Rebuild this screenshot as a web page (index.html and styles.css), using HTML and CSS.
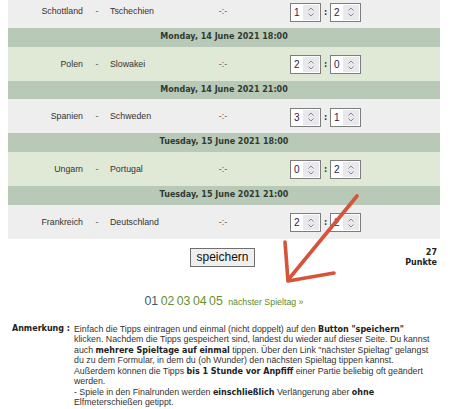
FILE: index.html
```html
<!DOCTYPE html>
<html lang="de">
<head>
<meta charset="utf-8">
<title>Tipps</title>
<link rel="stylesheet" href="styles.css">
</head>
<body>
<div class="page">
  <div class="matches">
    <div class="row grey">
      <span class="home">Schottland</span><span class="dash">-</span><span class="away">Tschechien</span><span class="result">-:-</span>
      <span class="tipp"><span class="score"><span class="val">1</span><span class="spin"><svg width="8" height="12" viewBox="0 0 8 12"><path d="M1.5 4.5 L4 2 L6.5 4.5 M1.5 7.5 L4 10 L6.5 7.5" fill="none" stroke="#8a8a8a" stroke-width="1"/></svg></span></span><span class="colon">:</span><span class="score"><span class="val">2</span><span class="spin"><svg width="8" height="12" viewBox="0 0 8 12"><path d="M1.5 4.5 L4 2 L6.5 4.5 M1.5 7.5 L4 10 L6.5 7.5" fill="none" stroke="#8a8a8a" stroke-width="1"/></svg></span></span></span>
    </div>
    <div class="head">Monday, 14 June 2021 18:00</div>
    <div class="row green">
      <span class="home">Polen</span><span class="dash">-</span><span class="away">Slowakei</span><span class="result">-:-</span>
      <span class="tipp"><span class="score"><span class="val">2</span><span class="spin"><svg width="8" height="12" viewBox="0 0 8 12"><path d="M1.5 4.5 L4 2 L6.5 4.5 M1.5 7.5 L4 10 L6.5 7.5" fill="none" stroke="#8a8a8a" stroke-width="1"/></svg></span></span><span class="colon">:</span><span class="score"><span class="val">0</span><span class="spin"><svg width="8" height="12" viewBox="0 0 8 12"><path d="M1.5 4.5 L4 2 L6.5 4.5 M1.5 7.5 L4 10 L6.5 7.5" fill="none" stroke="#8a8a8a" stroke-width="1"/></svg></span></span></span>
    </div>
    <div class="head">Monday, 14 June 2021 21:00</div>
    <div class="row grey">
      <span class="home">Spanien</span><span class="dash">-</span><span class="away">Schweden</span><span class="result">-:-</span>
      <span class="tipp"><span class="score"><span class="val">3</span><span class="spin"><svg width="8" height="12" viewBox="0 0 8 12"><path d="M1.5 4.5 L4 2 L6.5 4.5 M1.5 7.5 L4 10 L6.5 7.5" fill="none" stroke="#8a8a8a" stroke-width="1"/></svg></span></span><span class="colon">:</span><span class="score"><span class="val">1</span><span class="spin"><svg width="8" height="12" viewBox="0 0 8 12"><path d="M1.5 4.5 L4 2 L6.5 4.5 M1.5 7.5 L4 10 L6.5 7.5" fill="none" stroke="#8a8a8a" stroke-width="1"/></svg></span></span></span>
    </div>
    <div class="head">Tuesday, 15 June 2021 18:00</div>
    <div class="row green">
      <span class="home">Ungarn</span><span class="dash">-</span><span class="away">Portugal</span><span class="result">-:-</span>
      <span class="tipp"><span class="score"><span class="val">0</span><span class="spin"><svg width="8" height="12" viewBox="0 0 8 12"><path d="M1.5 4.5 L4 2 L6.5 4.5 M1.5 7.5 L4 10 L6.5 7.5" fill="none" stroke="#8a8a8a" stroke-width="1"/></svg></span></span><span class="colon">:</span><span class="score"><span class="val">2</span><span class="spin"><svg width="8" height="12" viewBox="0 0 8 12"><path d="M1.5 4.5 L4 2 L6.5 4.5 M1.5 7.5 L4 10 L6.5 7.5" fill="none" stroke="#8a8a8a" stroke-width="1"/></svg></span></span></span>
    </div>
    <div class="head">Tuesday, 15 June 2021 21:00</div>
    <div class="row grey">
      <span class="home">Frankreich</span><span class="dash">-</span><span class="away">Deutschland</span><span class="result">-:-</span>
      <span class="tipp"><span class="score"><span class="val">2</span><span class="spin"><svg width="8" height="12" viewBox="0 0 8 12"><path d="M1.5 4.5 L4 2 L6.5 4.5 M1.5 7.5 L4 10 L6.5 7.5" fill="none" stroke="#8a8a8a" stroke-width="1"/></svg></span></span><span class="colon">:</span><span class="score"><span class="val">2</span><span class="spin"><svg width="8" height="12" viewBox="0 0 8 12"><path d="M1.5 4.5 L4 2 L6.5 4.5 M1.5 7.5 L4 10 L6.5 7.5" fill="none" stroke="#8a8a8a" stroke-width="1"/></svg></span></span></span>
    </div>
  </div>

  <div class="actions">
    <span></span>
    <button class="save" type="button">speichern</button>
    <div class="points">27<br>Punkte</div>
  </div>

  <div class="pager">
    <a class="day current">01</a> <a class="day">02</a> <a class="day">03</a> <a class="day">04</a> <a class="day">05</a> <a class="next">nächster Spieltag »</a>
  </div>

  <div class="note">
    <div class="label">Anmerkung :</div>
    <div class="text">Einfach die Tipps eintragen und einmal (nicht doppelt) auf den <b>Button "speichern"</b><br>klicken. Nachdem die Tipps gespeichert sind, landest du wieder auf dieser Seite. Du kannst<br>auch <b>mehrere Spieltage auf einmal</b> tippen. Über den Link "nächster Spieltag" gelangst<br>du zu dem Formular, in dem du (oh Wunder) den nächsten Spieltag tippen kannst.<br>Außerdem können die Tipps <b>bis 1 Stunde vor Anpfiff</b> einer Partie beliebig oft geändert<br>werden.<br>- Spiele in den Finalrunden werden <b>einschließlich</b> Verlängerung aber <b>ohne</b><br>Elfmeterschießen getippt.</div>
  </div>

  <svg class="arrow" width="450" height="409" viewBox="0 0 450 409">
    <g fill="none" stroke="#d5553a" stroke-width="3.6" stroke-linecap="round" stroke-linejoin="round">
      <path d="M357 196 L288 280"/>
      <path d="M285 242 L288 281 L334 273"/>
    </g>
  </svg>
</div>
</body>
</html>
```

FILE: styles.css
```css
html, body {
  margin: 0;
  padding: 0;
  background: #ffffff;
}

.page {
  position: relative;
  width: 450px;
  height: 409px;
  overflow: hidden;
  font-family: "Liberation Sans", Arial, sans-serif;
  font-size: 8.8px;
  color: #333333;
}

.matches {
  margin: -6px 10px 0 8px;
  width: 432px;
}

.row {
  display: grid;
  grid-template-columns: 78px 22px 82px 66px 1fr;
  align-items: center;
  height: 34px;
}

.grey { background: #eeeeee; }
.green { background: #dfe9d6; }

.head {
  height: 18.67px;
  line-height: 18.67px;
  background: #b9c9b8;
  text-align: center;
  font-family: "DejaVu Sans", Verdana, sans-serif;
  font-weight: bold;
  font-size: 8px;
  color: #2f3a30;
}

.home {
  text-align: right;
  padding-right: 3px;
}

.dash {
  text-align: center;
  color: #555555;
}

.away {
  padding-left: 2px;
}

.result {
  text-align: center;
  color: #555555;
}

.tipp {
  display: flex;
  align-items: center;
  padding-left: 34px;
  padding-top: 2px;
}

.score {
  display: flex;
  width: 29px;
  height: 17px;
  border: 1px solid #7d7d7d;
  background: #ffffff;
}

.val {
  width: 12px;
  padding-left: 3px;
  box-sizing: border-box;
  font-size: 10px;
  line-height: 17px;
  color: #1f2150;
}

.spin {
  flex: 1;
  margin: 1px 1px 1px 0;
  background: #e9e9ed;
  display: flex;
  align-items: center;
  justify-content: center;
}

.spin svg {
  display: block;
}

.colon {
  width: 9px;
  text-align: center;
  font-family: "DejaVu Sans", Verdana, sans-serif;
  font-weight: bold;
  font-size: 8px;
  color: #333333;
}

.actions {
  display: grid;
  grid-template-columns: 1fr auto 1fr;
  align-items: start;
  margin: 9px 13px 0 8px;
  width: 429px;
}

.save {
  font-family: "Liberation Sans", Arial, sans-serif;
  font-size: 12px;
  height: 19px;
  padding: 0 5px;
  margin: 0;
  border: 1px solid #6f6f6f;
  border-radius: 0;
  background: #efefef;
  color: #111111;
  line-height: 17px;
}

.points {
  justify-self: end;
  text-align: right;
  font-family: "DejaVu Sans", Verdana, sans-serif;
  font-weight: bold;
  font-size: 8px;
  line-height: 10.5px;
  color: #222222;
  padding-top: 0;
}

.pager {
  margin: 25px 0 0 8px;
  width: 432px;
  text-align: center;
  line-height: 14px;
}

.day {
  font-size: 12.3px;
  color: #6b8f2b;
}

.day.current {
  color: #3b5a70;
}

.next {
  font-size: 8.8px;
  color: #5c8a2a;
  margin-left: 3px;
}

.note {
  display: grid;
  grid-template-columns: 62px 1fr;
  column-gap: 4px;
  margin: 15px 0 0 8px;
  line-height: 10.5px;
}

.label {
  text-align: right;
  font-family: "DejaVu Sans", Verdana, sans-serif;
  font-weight: bold;
  font-size: 8px;
  color: #222222;
}

.text b {
  font-family: "DejaVu Sans", Verdana, sans-serif;
  font-weight: bold;
  font-size: 8px;
  line-height: 8px;
  color: #222222;
}

.arrow {
  position: absolute;
  left: 0;
  top: 0;
  pointer-events: none;
}
```
